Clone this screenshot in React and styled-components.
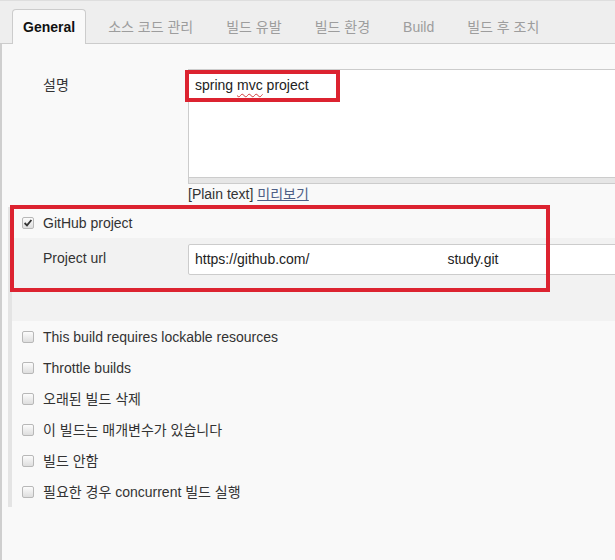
import React from "react";
import styled, { createGlobalStyle } from "styled-components";

const GlobalStyle = createGlobalStyle`
  html, body {
    margin: 0;
    padding: 0;
    background: #f9f9f9;
    overflow: hidden;
  }
  body {
    font-family: "Liberation Sans", Arial, "Noto Sans CJK KR", sans-serif;
    font-size: 14px;
    color: #333;
  }
`;

const Page = styled.div`
  width: 680px;
  height: 560px;
  display: flex;
  flex-direction: column;
`;

const TabBar = styled.ul`
  display: flex;
  align-items: flex-end;
  gap: 11px;
  height: 44px;
  box-sizing: border-box;
  margin: 0;
  padding: 8px 0 0 12px;
  list-style: none;
  background: #eeeeee;
  border-top: 1px solid #dedede;
  border-bottom: 1px solid #cccccc;
`;

const Tab = styled.li`
  height: 35px;
  margin-bottom: -1px;
  box-sizing: border-box;
  padding: 0 10px;
  line-height: 34px;
  border: 1px solid ${({ $active }) => ($active ? "#cccccc" : "transparent")};
  border-bottom: none;
  border-radius: 4px 4px 0 0;
  background: ${({ $active }) => ($active ? "#f9f9f9" : "transparent")};
  color: ${({ $active }) => ($active ? "#111" : "#9d9d9d")};
  font-weight: ${({ $active }) => ($active ? "bold" : "normal")};
  white-space: nowrap;
`;

const Content = styled.div`
  flex: 1;
  padding-top: 25px;
  border-left: 2px solid #cfcfcf;
  background: #f9f9f9;
`;

const FieldRow = styled.div`
  display: grid;
  grid-template-columns: 145px 1fr;
  padding-left: ${({ $indent }) => $indent}px;
`;

const Label = styled.div`
  padding-top: ${({ $top }) => $top}px;
  line-height: 20px;
  color: #333;
`;

const Field = styled.div`
  position: relative;
`;

const TextArea = styled.div`
  height: 109px;
  box-sizing: border-box;
  padding: 5px 6px;
  line-height: 20px;
  background: #fff;
  border: 1px solid #cccccc;
  color: #222;
`;

const Misspelled = styled.span`
  text-decoration: underline wavy #d23c3c;
  text-decoration-thickness: 1px;
  text-underline-offset: 3px;
`;

const Handle = styled.div`
  height: 5px;
  background: #e6e6e6;
  border: 1px solid #cccccc;
  border-top: none;
`;

const Hint = styled.div`
  line-height: 20px;
  color: #333;

  a {
    color: #4e5f86;
    text-decoration: underline;
  }
`;

const TextBox = styled.div`
  height: 31px;
  box-sizing: border-box;
  padding: 0 6px;
  line-height: 29px;
  color: #222;
  background: #fff;
  border: 1px solid #cccccc;
  border-radius: 2px;
  white-space: nowrap;
`;

const Hidden = styled.span`
  display: inline-block;
  width: 138px;
`;

const Section = styled.div`
  position: relative;
  margin: 3px 0 0 6px;
  border-left: 4px solid #e4e4e4;
`;

const CheckRow = styled.label`
  display: flex;
  align-items: center;
  gap: 9px;
  height: 31px;
  padding-left: 11px;
  line-height: 20px;
  color: #333;
`;

const Box = styled.span`
  display: flex;
  align-items: center;
  justify-content: center;
  width: 12px;
  height: 12px;
  margin-left: -1px;
  box-sizing: border-box;
  border: 1px solid #b8b8b8;
  border-radius: 2px;
  background: linear-gradient(#fcfcfc, #dedede);
`;

const Nested = styled.div`
  padding: 6px 0 46px;
  background: #f2f2f2;
`;

const Mark = styled.div`
  position: absolute;
  left: ${({ $x }) => $x}px;
  top: ${({ $y }) => $y}px;
  width: ${({ $w }) => $w}px;
  height: ${({ $h }) => $h}px;
  box-sizing: border-box;
  border: 4px solid #dc2330;
  pointer-events: none;
`;

const Checkbox = ({ checked }) => (
  <Box>
    {checked && (
      <svg width="10" height="10" viewBox="0 0 10 10">
        <path d="M1.6 5 L4 7.4 L8.4 2" fill="none" stroke="#333" strokeWidth="1.8" />
      </svg>
    )}
  </Box>
);

const tabs = ["General", "소스 코드 관리", "빌드 유발", "빌드 환경", "Build", "빌드 후 조치"];

const options = [
  "This build requires lockable resources",
  "Throttle builds",
  "오래된 빌드 삭제",
  "이 빌드는 매개변수가 있습니다",
  "빌드 안함",
  "필요한 경우 concurrent 빌드 실행",
];

export default function App() {
  return (
    <>
      <GlobalStyle />
      <Page>
        <TabBar>
          {tabs.map((t, i) => (
            <Tab key={t} $active={i === 0}>{t}</Tab>
          ))}
        </TabBar>
        <Content>
          <FieldRow $indent={41}>
            <Label $top={6}>설명</Label>
            <Field>
              <TextArea>
                spring <Misspelled>mvc</Misspelled> project
              </TextArea>
              <Handle />
              <Hint>
                [Plain text] <a href="#preview">미리보기</a>
              </Hint>
              <Mark $x={-3} $y={1} $w={155} $h={32} />
            </Field>
          </FieldRow>

          <Section>
            <CheckRow>
              <Checkbox checked />
              GitHub project
            </CheckRow>
            <Nested>
              <FieldRow $indent={31}>
                <Label $top={4}>Project url</Label>
                <Field>
                  <TextBox>
                    https://github.com/<Hidden />study.git
                  </TextBox>
                </Field>
              </FieldRow>
            </Nested>
            {options.map((o) => (
              <CheckRow key={o}>
                <Checkbox />
                {o}
              </CheckRow>
            ))}
            <Mark $x={-2} $y={-2} $w={540} $h={87} />
          </Section>
        </Content>
      </Page>
    </>
  );
}
